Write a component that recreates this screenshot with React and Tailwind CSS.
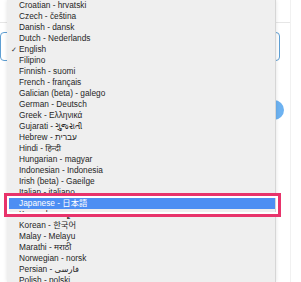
import React from "react"

const languages = [
  "Croatian - hrvatski",
  "Czech - čeština",
  "Danish - dansk",
  "Dutch - Nederlands",
  "English",
  "Filipino",
  "Finnish - suomi",
  "French - français",
  "Galician (beta) - galego",
  "German - Deutsch",
  "Greek - Ελληνικά",
  "Gujarati - ગુજરાતી",
  "Hebrew - עברית",
  "Hindi - हिन्दी",
  "Hungarian - magyar",
  "Indonesian - Indonesia",
  "Irish (beta) - Gaeilge",
  "Italian - italiano",
  "Japanese - 日本語",
  "Kannada - ಕನ್ನಡ",
  "Korean - 한국어",
  "Malay - Melayu",
  "Marathi - मराठी",
  "Norwegian - norsk",
  "Persian - فارسی",
  "Polish - polski",
]

export default function App() {
  return (
    <div
      className="relative w-[301px] h-[282px] overflow-hidden bg-white"
      style={{ fontFamily: '"Liberation Sans", "Noto Sans", "DejaVu Sans", "Noto Sans CJK JP", sans-serif' }}
    >
      {/* page behind the menu */}
      <div className="flex flex-col border-r border-[#f1f1f1] w-[291px] h-full">
        <div className="h-[23px] border-b border-[#e6e6e6]" />
        <div className="mt-[9px] mr-[10px] h-[29px] border border-[#5f9fd3] rounded-[4px]" />
        <div className="mt-[39px] ml-[264px] w-5 h-5 rounded-full bg-[#6db2f1]" />
      </div>

      {/* language menu */}
      <div className="absolute left-[7px] top-0 w-[269px] h-[282px] bg-[#efefef] border-r border-[#d6d6d6] shadow-[0_0_4px_rgba(0,0,0,0.12)]">
        {languages.map((lang) => {
          const selected = lang.startsWith("Japanese")
          return (
            <div
              key={lang}
              className={
                "relative h-[11px] pl-[12px] flex items-center text-[8.3px] leading-none whitespace-nowrap " +
                (selected ? "bg-[#4d8ef3] text-white" : "text-[#262626]")
              }
            >
              {lang === "English" && (
                <span className="absolute left-[4px] text-[7px] text-[#333]">✓</span>
              )}
              {lang}
            </div>
          )
        })}
      </div>

      {/* annotation box */}
      <div className="absolute left-[4px] top-[193px] w-[277px] h-[24px] border-[3px] border-[#e8336b] shadow-[inset_0_0_0_2px_#ffffff]" />
    </div>
  )
}
